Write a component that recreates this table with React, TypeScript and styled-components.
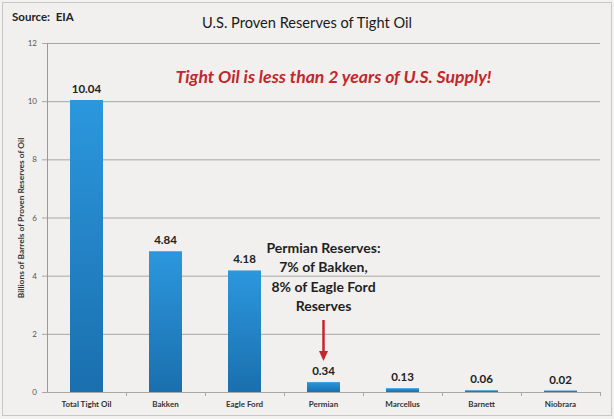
import React from 'react';
import styled, { createGlobalStyle } from 'styled-components';

const GlobalStyle = createGlobalStyle`
  html, body {
    margin: 0;
    padding: 0;
    background: #f3f2f0;
  }
  body {
    font-family: Lato, 'Liberation Sans', Arial, sans-serif;
  }
`;

const Frame = styled.div`
  box-sizing: border-box;
  width: 610px;
  height: 414px;
  margin: 2px 0 0 2px;
  border: 1px solid #c9c7c4;
  background: #f1f0ee;
  display: flex;
  flex-direction: column;
`;

const Header = styled.div`
  height: 36px;
  display: grid;
  grid-template-columns: 1fr auto 1fr;
  align-items: start;
  padding: 0 9px;
`;

const Source = styled.div`
  margin-top: 7px;
  font-size: 11.5px;
  line-height: 13px;
  font-weight: 700;
  color: #222;
  white-space: pre;
`;

const Title = styled.div`
  margin-top: 11px;
  font-size: 14.6px;
  line-height: 17px;
  color: #1a1a1a;
  white-space: nowrap;
`;

const Chart = styled.svg`
  display: block;
  font-family: Lato, 'Liberation Sans', Arial, sans-serif;
`;

const data = [
  { name: 'Total Tight Oil', value: 10.04 },
  { name: 'Bakken', value: 4.84 },
  { name: 'Eagle Ford', value: 4.18 },
  { name: 'Permian', value: 0.34 },
  { name: 'Marcellus', value: 0.13 },
  { name: 'Barnett', value: 0.06 },
  { name: 'Niobrara', value: 0.02 },
];

// plot box in chart coordinates
const W = 608;
const H = 376;
const left = 44;
const right = 597;
const top = 4;
const bottom = 353;
const maxY = 12;
const unit = (bottom - top) / maxY;
const slot = (right - left) / data.length;
const barW = 33;
const y = (v: number) => bottom - v * unit;

const red = '#c3262c';
const note = ['Permian Reserves:', '7% of Bakken,', '8% of Eagle Ford', 'Reserves'];

const App: React.FC = () => {
  const permianX = left + slot * 3.5;

  return (
    <>
      <GlobalStyle />
      <Frame>
        <Header>
          <Source>{'Source:  EIA'}</Source>
          <Title>U.S. Proven Reserves of Tight Oil</Title>
          <div />
        </Header>
        <Chart width={W} height={H} viewBox={`0 0 ${W} ${H}`}>
          <defs>
            <linearGradient id="bar" x1="0" y1="0" x2="0" y2="1">
              <stop offset="0" stopColor="#2c97dd" />
              <stop offset="1" stopColor="#1a6fae" />
            </linearGradient>
          </defs>

          {/* grid + y ticks */}
          {[0, 2, 4, 6, 8, 10, 12].map((v) => (
            <g key={v}>
              <line x1={left - 5} x2={right} y1={y(v) + 0.5} y2={y(v) + 0.5} stroke="#a8a7a5" strokeWidth={1} />
              <text x={34} y={y(v) + 3} fontSize={8} fill="#555" textAnchor="end">
                {v}
              </text>
            </g>
          ))}
          <line x1={left + 0.5} x2={left + 0.5} y1={top} y2={bottom} stroke="#9a9997" strokeWidth={1} />

          {/* x ticks */}
          {data.map((_, i) => (
            <line
              key={i}
              x1={left + slot * (i + 1) + 0.5}
              x2={left + slot * (i + 1) + 0.5}
              y1={bottom}
              y2={bottom + 4}
              stroke="#a8a7a5"
            />
          ))}

          <text
            transform="translate(21 179) rotate(-90)"
            fontSize={8.4}
            fontWeight={700}
            fill="#333"
            textAnchor="middle"
          >
            Billions of Barrels of Proven Reserves of Oil
          </text>

          {data.map((d, i) => {
            const cx = left + slot * (i + 0.5);
            const h = Math.max(d.value * unit, 1.5);
            return (
              <g key={d.name}>
                <rect x={cx - barW / 2} y={bottom - h} width={barW} height={h} fill="url(#bar)" />
                <text x={cx} y={bottom - h - 7} fontSize={11.5} fontWeight={700} fill="#222" textAnchor="middle">
                  {d.value.toFixed(2)}
                </text>
                <text x={cx} y={368} fontSize={8} fontWeight={700} fill="#333" textAnchor="middle">
                  {d.name}
                </text>
              </g>
            );
          })}

          <text x={330.5} y={44} fontSize={17.6} fontWeight={700} fontStyle="italic" fill={red} textAnchor="middle">
            Tight Oil is less than 2 years of U.S. Supply!
          </text>

          {note.map((line, i) => (
            <text key={line} x={permianX} y={214 + i * 19.3} fontSize={14} fontWeight={700} fill="#1f1f1f" textAnchor="middle">
              {line}
            </text>
          ))}

          <line x1={permianX} x2={permianX} y1={281} y2={314} stroke={red} strokeWidth={2.5} />
          <path d={`M${permianX - 4.5} ${312} L${permianX + 4.5} ${312} L${permianX} ${322} Z`} fill={red} />
        </Chart>
      </Frame>
    </>
  );
};

export default App;
